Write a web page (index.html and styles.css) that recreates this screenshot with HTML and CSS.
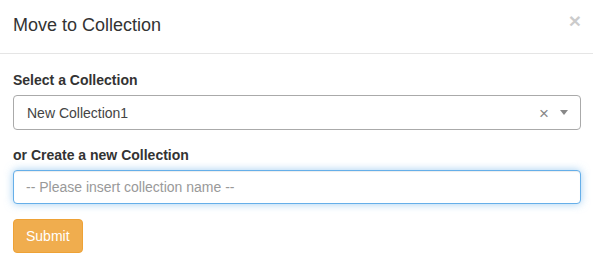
FILE: index.html
```html
<!DOCTYPE html>
<html>
<head>
<meta charset="utf-8">
<link rel="stylesheet" href="styles.css">
</head>
<body>
<div class="modal">
  <div class="modal-header">
    <h4 class="modal-title">Move to Collection</h4>
    <button class="close" type="button">&times;</button>
  </div>
  <div class="modal-body">
    <div class="form-group">
      <label class="label">Select a Collection</label>
      <div class="select">
        <span class="select-value">New Collection1</span>
        <span class="select-clear">&times;</span>
        <span class="select-arrow"></span>
      </div>
    </div>
    <div class="form-group">
      <label class="label">or Create a new Collection</label>
      <input class="form-control" type="text" placeholder="-- Please insert collection name --">
    </div>
    <button class="btn-submit" type="button">Submit</button>
  </div>
</div>
</body>
</html>
```
FILE: styles.css
```css
* { box-sizing: border-box; }
html, body {
  margin: 0;
  padding: 0;
  background: #fff;
  font-family: "Liberation Sans", Arial, sans-serif;
  font-size: 14px;
  color: #333;
}
.modal {
  width: 593px;
  height: 268px;
  background: #fff;
}
.modal-header {
  height: 54px;
  padding: 0 13px 0 13px;
  border-bottom: 1px solid #e5e5e5;
  display: flex;
  align-items: center;
  justify-content: space-between;
}
.modal-title {
  margin: 0;
  font-size: 18px;
  font-weight: normal;
  line-height: 25px;
  color: #333;
  position: relative;
  top: -1px;
}
.close {
  border: 0;
  background: transparent;
  padding: 0;
  font-family: "Liberation Sans", Arial, sans-serif;
  font-size: 21px;
  font-weight: bold;
  line-height: 1;
  color: #000;
  opacity: 0.2;
  margin-right: -1px;
  position: relative;
  top: -6px;
}
.modal-body {
  padding: 16px 12px 0 13px;
}
.form-group {
  margin-bottom: 15px;
}
.label {
  display: block;
  font-weight: bold;
  line-height: 20px;
  margin-bottom: 5px;
}
.select {
  height: 35px;
  border: 1px solid #aaa;
  border-radius: 4px;
  display: flex;
  align-items: center;
  padding: 0 12px 0 13px;
  color: #444;
}
.select-value {
  flex: 1;
  line-height: 20px;
}
.select-clear {
  color: #888;
  font-size: 17px;
  line-height: 1;
  margin-right: 11px;
  position: relative;
  top: 1px;
}
.select-arrow {
  width: 0;
  height: 0;
  border-left: 4px solid transparent;
  border-right: 4px solid transparent;
  border-top: 5px solid #888;
}
.form-control {
  display: block;
  width: 100%;
  height: 34px;
  padding: 6px 12px;
  font-family: "Liberation Sans", Arial, sans-serif;
  font-size: 14px;
  line-height: 20px;
  color: #555;
  background: #fff;
  border: 1px solid #66afe9;
  border-radius: 4px;
  outline: 0;
  box-shadow: inset 0 1px 1px rgba(0,0,0,.075), 0 0 8px rgba(102,175,233,.6);
}
.form-control::placeholder {
  color: #999;
}
.btn-submit {
  height: 34px;
  padding: 6px 12px;
  font-family: "Liberation Sans", Arial, sans-serif;
  font-size: 14px;
  line-height: 20px;
  color: #fff;
  background: #f0ad4e;
  border: 1px solid #eea236;
  border-radius: 4px;
}
```
